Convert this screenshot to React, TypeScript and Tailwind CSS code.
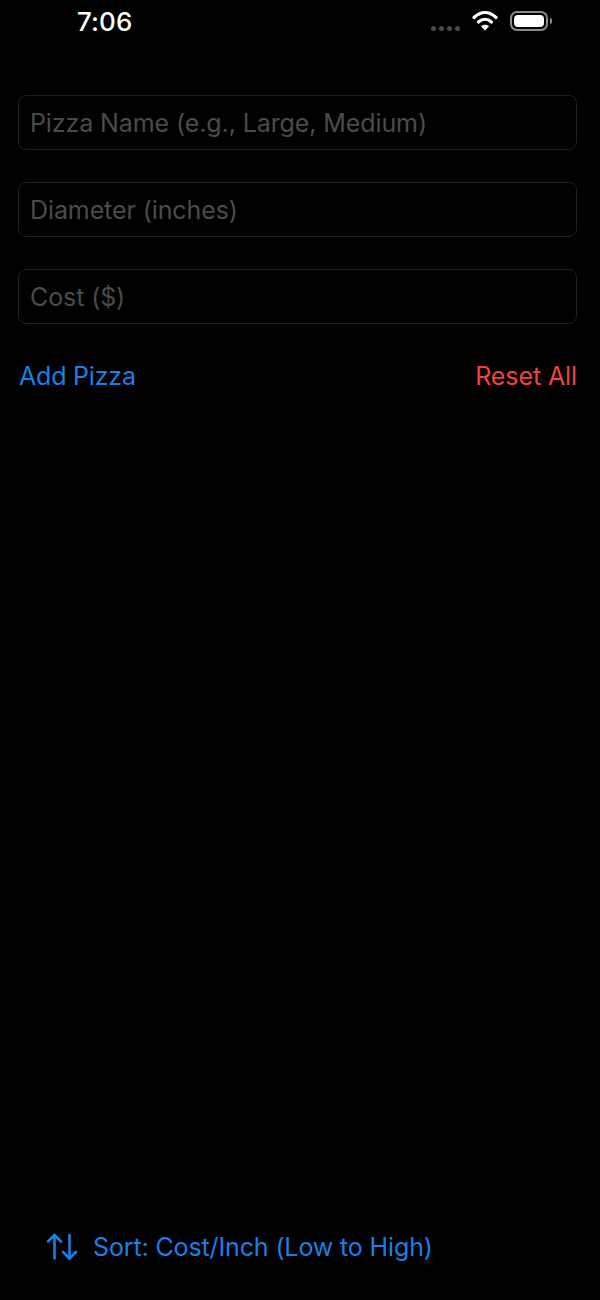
import React from 'react';

const fields = ['Pizza Name (e.g., Large, Medium)', 'Diameter (inches)', 'Cost ($)'];

const App: React.FC = () => {
  return (
    <div className="flex flex-col h-[1300px] w-[600px] bg-black font-['Inter',sans-serif] overflow-hidden">
      {/* status bar */}
      <div className="flex items-start justify-between h-[43px] pl-[77px] pr-[48px]">
        <span className="text-white text-[26px] leading-[43px] font-medium tracking-[0.1px]">7:06</span>
        <div className="flex items-center gap-[12px] pt-[10px]">
          <div className="flex gap-[3px] mt-[15px]">
            <div className="w-[5px] h-[5px] rounded-full bg-[#4a4a4a]" />
            <div className="w-[5px] h-[5px] rounded-full bg-[#4a4a4a]" />
            <div className="w-[5px] h-[5px] rounded-full bg-[#4a4a4a]" />
            <div className="w-[5px] h-[5px] rounded-full bg-[#4a4a4a]" />
          </div>
          <svg width="26" height="21" viewBox="0 0 26 21" fill="none">
            <path d="M2 7.5C9 1 17 1 24 7.5" stroke="white" strokeWidth="3.2" strokeLinecap="round" />
            <path d="M6.5 12C10.5 8.4 15.5 8.4 19.5 12" stroke="white" strokeWidth="3.2" strokeLinecap="round" />
            <path d="M13 20.5L9 16.2C11.4 14.2 14.6 14.2 17 16.2Z" fill="white" />
          </svg>
          <div className="flex items-center gap-[2px]">
            <div className="w-[38px] h-[20px] rounded-[7px] border-[2px] border-[#8a8a8a] p-[2px]">
              <div className="w-full h-full rounded-[4px] bg-white" />
            </div>
            <div className="w-[2px] h-[6px] rounded-r-full bg-[#8a8a8a]" />
          </div>
        </div>
      </div>

      {/* form */}
      <div className="flex flex-col gap-[32px] pl-[18px] pr-[23px] pt-[52px]">
        {fields.map((f) => (
          <div key={f} className="flex items-center h-[55px] px-[11px] pt-[3px] rounded-[8px] border border-[#1f1f1f]">
            <span className="text-[25px] text-[#4b4b4b] tracking-[-0.1px]">{f}</span>
          </div>
        ))}
      </div>

      <div className="flex justify-between pl-[19px] pr-[23px] pt-[34px]">
        <span className="text-[25px] leading-[36px] text-[#1a7fe8] tracking-[-0.2px]">Add Pizza</span>
        <span className="text-[25px] leading-[36px] text-[#f0433a] tracking-[-0.1px]">Reset All</span>
      </div>

      <div className="flex-1" />

      {/* sort */}
      <div className="flex items-center gap-[15px] pl-[45px] pb-[35px]">
        <svg width="33" height="30" viewBox="0 0 33 30" fill="none" stroke="#1a7fe8" strokeWidth="2.6" strokeLinecap="round" strokeLinejoin="round">
          <path d="M9.5 26.5V3" />
          <path d="M3 9.5L9.5 3L16 9.5" />
          <path d="M24.5 3V26.5" />
          <path d="M18 20L24.5 26.5L31 20" />
        </svg>
        <span className="text-[25px] leading-[36px] text-[#1a7fe8] tracking-[-0.13px]">Sort: Cost/Inch (Low to High)</span>
      </div>
    </div>
  );
};

export default App;
